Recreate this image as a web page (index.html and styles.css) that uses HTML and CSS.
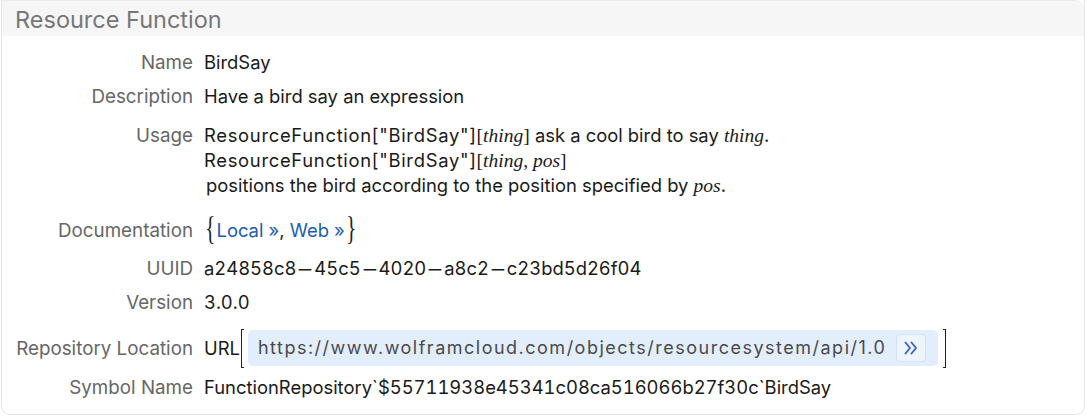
FILE: index.html
```html
<!DOCTYPE html>
<html>
<head>
<meta charset="utf-8">
<link rel="stylesheet" href="styles.css">
</head>
<body>
<div class="panel">
  <div class="panel-head">Resource Function</div>
  <div class="panel-body">
    <div class="row r-name">
      <div class="label">Name</div>
      <div class="value">BirdSay</div>
    </div>
    <div class="row r-desc">
      <div class="label">Description</div>
      <div class="value">Have a bird say an expression</div>
    </div>
    <div class="row r-usage">
      <div class="label">Usage</div>
      <div class="value usage">
        <div class="uline"><span class="code">ResourceFunction["BirdSay"]</span><span class="math">[<i>thing</i>]</span> ask a cool bird to say <span class="math"><i>thing</i></span>.</div>
        <div class="uline"><span class="code">ResourceFunction["BirdSay"]</span><span class="math">[<i>thing</i>, <i>pos</i>]</span></div>
        <div class="uline indent">positions the bird according to the position specified by <span class="math"><i>pos</i></span>.</div>
      </div>
    </div>
    <div class="row r-doc">
      <div class="label">Documentation</div>
      <div class="value doc"><span class="brace">{</span><a class="link">Local »</a>, <a class="link">Web »</a><span class="brace">}</span></div>
    </div>
    <div class="row r-uuid">
      <div class="label">UUID</div>
      <div class="value num">a24858c8<span class="dash">−</span>45c5<span class="dash">−</span>4020<span class="dash">−</span>a8c2<span class="dash">−</span>c23bd5d26f04</div>
    </div>
    <div class="row r-ver">
      <div class="label">Version</div>
      <div class="value num">3.0.0</div>
    </div>
    <div class="row r-repo">
      <div class="label">Repository Location</div>
      <div class="value repo">
        <span>URL</span>
        <span class="bracket left"></span>
        <span class="urlbox">
          <span class="urltext">https://www.wolframcloud.com/objects/resourcesystem/api/1.0</span>
          <span class="urlbtn"><svg width="16" height="14" viewBox="0 0 16 14"><path d="M2.5 1.5 L7 7 L2.5 12.5 M8.5 1.5 L13 7 L8.5 12.5" fill="none" stroke="#3a62c9" stroke-width="1.9" stroke-linecap="round" stroke-linejoin="round"/></svg></span>
        </span>
        <span class="bracket right"></span>
      </div>
    </div>
    <div class="row r-sym">
      <div class="label">Symbol Name</div>
      <div class="value num">FunctionRepository`$55711938e45341c08ca516066b27f30c`BirdSay</div>
    </div>
  </div>
</div>
</body>
</html>
```
FILE: styles.css
```css
html, body {
  margin: 0;
  padding: 0;
  background: #ffffff;
}
body {
  font-family: Inter, "Liberation Sans", sans-serif;
  font-size: 18.4px;
  color: #1a1a1a;
}
.panel {
  margin: 0 1px;
  width: 1084px;
  height: 415px;
  box-sizing: border-box;
  border: 1px solid #e6e6e6;
  border-top: none;
  border-radius: 0 0 9px 9px;
  overflow: hidden;
}
.panel-head {
  height: 36px;
  background: #f6f6f6;
  color: #777777;
  font-size: 23.5px;
  line-height: 38px;
  padding-left: 13px;
  border-top: 1px solid #ececec;
  border-radius: 0 9px 0 0;
  box-sizing: border-box;
}
.panel-body {
  display: flex;
  flex-direction: column;
}
.row {
  display: flex;
  align-items: baseline;
  line-height: 24px;
  height: 24px;
}
.label {
  flex: none;
  width: 202px;
  text-align: right;
  color: #666666;
  font-size: 18.8px;
  line-height: 24px;
  padding-right: 11px;
  box-sizing: border-box;
}
.value {
  white-space: nowrap;
  line-height: 24px;
}
.num {
  font-variant-numeric: tabular-nums;
}
.code {
  letter-spacing: 0.7px;
}
.r-name { margin-top: 14px; }
.r-desc { margin-top: 10px; }
.r-usage { margin-top: 15px; height: 75px; }
.usage .uline { height: 25px; line-height: 25px; }
.r-doc { margin-top: 20px; }
.r-uuid { margin-top: 14px; }
.r-ver { margin-top: 10px; }
.r-repo { margin-top: 22px; }
.r-sym { margin-top: 15px; }
.math {
  font-family: "Liberation Serif", serif;
  font-size: 19.5px;
  line-height: 0;
}
.indent { padding-left: 2px; }
.dash {
  display: inline-block;
  padding: 0 3px;
  transform: scaleX(1.5);
}
.brace {
  display: inline-block;
  font-family: "Liberation Serif", serif;
  font-size: 26px;
  line-height: 0;
  color: #222;
  transform: scale(0.8, 1.3);
}
.link {
  color: #1b5bb3;
  text-decoration: none;
}
.repo {
  display: flex;
  align-items: center;
  height: 24px;
  line-height: 24px;
}
.bracket {
  flex: none;
  width: 3px;
  height: 39px;
  border: 1.5px solid #222;
  box-sizing: border-box;
}
.bracket.left {
  border-right: none;
  margin-left: 1px;
  margin-right: 4px;
}
.bracket.right {
  border-left: none;
  margin-left: 5px;
}
.urlbox {
  flex: none;
  display: flex;
  align-items: center;
  height: 36px;
  background: #e3eefc;
  border-radius: 5px;
  padding-left: 10px;
  padding-right: 12px;
}
.urltext {
  font-size: 18px;
  color: #4a4a4a;
  letter-spacing: 1.5px;
}
.urlbtn {
  display: flex;
  align-items: center;
  justify-content: center;
  margin-left: 10px;
  width: 30px;
  height: 28px;
  box-sizing: border-box;
  background: #eef5fe;
  border: 1px solid #d3e2f6;
  border-radius: 4px;
}
```
